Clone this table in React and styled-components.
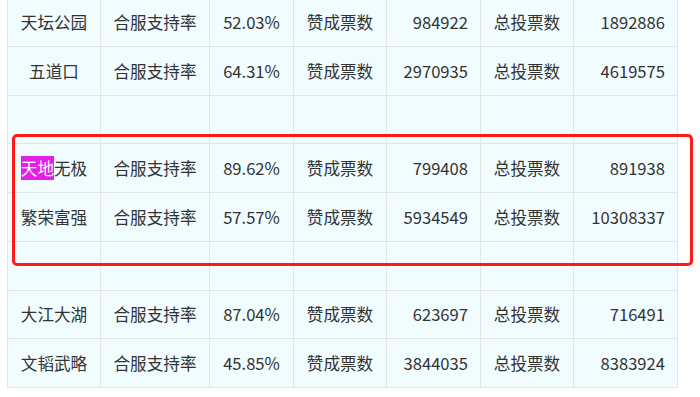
import React from "react";
import styled, { createGlobalStyle } from "styled-components";

const Global = createGlobalStyle`
  body {
    margin: 0;
    background: #fff;
    font-family: "Noto Sans CJK SC", "Noto Sans", sans-serif;
    color: #333;
  }
`;

const Wrap = styled.div`
  position: relative;
  padding-left: 7px;
  margin-top: -3px;
`;

const Table = styled.table`
  border-collapse: collapse;
  table-layout: fixed;
  width: 671px;
  background: #f1fcff;
`;

const Row = styled.tr`
  height: 48.75px;
`;

const Cell = styled.td`
  border: 1px solid #e2e4e6;
  padding: 0 12px;
  font-size: 16.6px;
  line-height: 20px;
  text-align: ${(p) => (p.$right ? "right" : "center")};
  white-space: nowrap;
`;

const Mark = styled.span`
  background: #e41ee6;
  color: #fff;
`;

const Highlight = styled.div`
  position: absolute;
  left: 12px;
  top: 137px;
  width: 681px;
  height: 132px;
  box-sizing: border-box;
  border: 3.5px solid #ff1a1a;
  border-radius: 5px;
  pointer-events: none;
`;

const rows = [
  ["天坛公园", "52.03%", "984922", "1892886"],
  ["五道口", "64.31%", "2970935", "4619575"],
  null,
  [
    <>
      <Mark>天地</Mark>无极
    </>,
    "89.62%",
    "799408",
    "891938",
  ],
  ["繁荣富强", "57.57%", "5934549", "10308337"],
  null,
  ["大江大湖", "87.04%", "623697", "716491"],
  ["文韬武略", "45.85%", "3844035", "8383924"],
];

const widths = [93, 109, 84, 93, 94, 93, 104];

export default function App() {
  return (
    <>
      <Global />
      <Wrap>
        <Table>
          <colgroup>
            {widths.map((w, i) => (
              <col key={i} style={{ width: w }} />
            ))}
          </colgroup>
          <tbody>
            {rows.map((r, i) =>
              r ? (
                <Row key={i}>
                  <Cell>{r[0]}</Cell>
                  <Cell>合服支持率</Cell>
                  <Cell>{r[1]}</Cell>
                  <Cell>赞成票数</Cell>
                  <Cell $right>{r[2]}</Cell>
                  <Cell>总投票数</Cell>
                  <Cell $right>{r[3]}</Cell>
                </Row>
              ) : (
                <Row key={i}>
                  {widths.map((_, j) => (
                    <Cell key={j} />
                  ))}
                </Row>
              )
            )}
          </tbody>
        </Table>
        <Highlight />
      </Wrap>
    </>
  );
}
